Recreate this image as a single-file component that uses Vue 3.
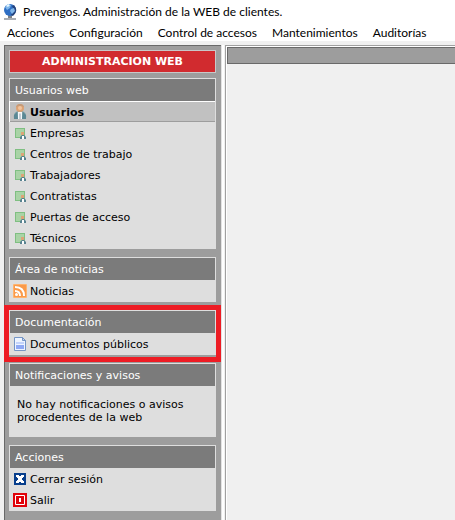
<template>
  <div class="window">
    <header class="title-bar">
      <svg class="globe" viewBox="0 0 16 18" aria-hidden="true">
        <path d="M2 15h12v2H2z" fill="#a9adb3" />
        <path d="M6 12h4v3H6z" fill="#7d8288" />
        <circle cx="8" cy="7" r="6" fill="#2f6fc4" />
        <path d="M12 2q5 6-1 11l-2-1q4-5 1-9z" fill="#24427c" />
        <path d="M3 4l3-3 3 1-1 3-3 2zM9 6l3-1 1 3-3 3-2-3z" fill="#7fb6ea" />
        <path d="M4 3l2-2 2 1-2 2z" fill="#e5f6ff" />
      </svg>
      <h1>Prevengos. Administración de la WEB de clientes.</h1>
    </header>

    <nav class="menu-bar">
      <button v-for="item in menu" :key="item" type="button">{{ item }}</button>
    </nav>

    <div class="workspace">
      <aside class="sidebar">
        <h2 class="banner">ADMINISTRACION WEB</h2>
        <section
          v-for="panel in panels"
          :key="panel.title"
          class="panel"
          :class="{ highlighted: panel.highlighted }"
        >
          <h3>{{ panel.title }}</h3>
          <p v-if="panel.message">{{ panel.message }}</p>
          <ul v-else>
            <li v-for="item in panel.items" :key="item.label">
              <button
                type="button"
                :class="{ selected: selected === item.label }"
                @click="selected = item.label"
              >
                <svg v-if="item.icon === 'user'" viewBox="0 0 14 16" aria-hidden="true">
                  <path d="M1 15q-1-7 4-8h4q5 1 4 8z" fill="#7ba0a8" />
                  <path d="M1 15v-4l3-3 1 7zM13 15v-4l-3-3-1 7z" fill="#5b8894" />
                  <path d="M5 8h4v7H5z" fill="#f5f8fa" />
                  <path d="M7 9l1 1v5H6v-5z" fill="#c3ccd4" />
                  <ellipse cx="7" cy="4" rx="4" ry="4" fill="#dda273" />
                  <path d="M3 3q1-3 4-3t4 3q-4-2-8 0z" fill="#c39a78" />
                  <ellipse cx="7" cy="4" rx="2" ry="2" fill="#f3c49c" />
                </svg>
                <svg v-else-if="item.icon === 'group'" viewBox="0 0 14 14" aria-hidden="true">
                  <path d="M2 2h10v10H2z" fill="#7fbf82" />
                  <path d="M3 3h8v8H3z" fill="#a9d3a6" />
                  <path d="M7 13v-2l2-2h2l2 2v2z" fill="#58828f" />
                  <path d="M9 10h2v3H9z" fill="#fff" />
                  <path d="M8 6h3v3H8z" fill="#dda377" />
                </svg>
                <svg v-else-if="item.icon === 'rss'" viewBox="0 0 14 14" aria-hidden="true">
                  <rect width="14" height="14" rx="1" fill="#ffb36d" />
                  <path d="M1 1h12v12H1z" fill="#fa9a4a" />
                  <g fill="none" stroke="#fff" stroke-width="2">
                    <path d="M2 7q5 0 5 5M2 3q9 0 9 9" />
                  </g>
                  <circle cx="3.5" cy="10.5" r="1.5" fill="#fff" />
                </svg>
                <svg v-else-if="item.icon === 'document'" viewBox="0 0 14 14" aria-hidden="true">
                  <path d="M1.5.5h8l3 3v10h-11z" fill="#eef4ff" stroke="#7595c5" />
                  <path d="M9.5.5v3h3z" fill="#c4d7f5" stroke="#7595c5" />
                  <path d="M3 5h8v2H3z" fill="#c3d3fb" />
                  <path d="M3 8h8v4H3z" fill="#8fa9f4" />
                </svg>
                <svg v-else-if="item.icon === 'close'" viewBox="0 0 14 14" aria-hidden="true">
                  <path d="M1 1h12v12H1z" fill="#073e8c" />
                  <path
                    d="M3 3h3v1h2V3h3v2h-1v1H9v2h1v1h1v2H8v-1H6v1H3V9h1V8h1V6H4V5H3z"
                    fill="#fff"
                  />
                </svg>
                <svg v-else viewBox="0 0 14 14" aria-hidden="true">
                  <path d="M0 0h14v14H0z" fill="#e00008" />
                  <path d="M2.5 2.5h9v9h-9z" fill="none" stroke="#fff" />
                  <path d="M6 5h2v4H6z" fill="#fff" />
                </svg>
                <span>{{ item.label }}</span>
              </button>
            </li>
          </ul>
        </section>
      </aside>

      <main class="content">
        <div class="content-bar"></div>
      </main>
    </div>
  </div>
</template>

<script setup>
import { ref } from "vue";

const selected = ref("Usuarios");

const menu = [
  "Acciones",
  "Configuración",
  "Control de accesos",
  "Mantenimientos",
  "Auditorías",
];

const panels = [
  {
    title: "Usuarios web",
    items: [
      { label: "Usuarios", icon: "user" },
      { label: "Empresas", icon: "group" },
      { label: "Centros de trabajo", icon: "group" },
      { label: "Trabajadores", icon: "group" },
      { label: "Contratistas", icon: "group" },
      { label: "Puertas de acceso", icon: "group" },
      { label: "Técnicos", icon: "group" },
    ],
  },
  { title: "Área de noticias", items: [{ label: "Noticias", icon: "rss" }] },
  {
    title: "Documentación",
    highlighted: true,
    items: [{ label: "Documentos públicos", icon: "document" }],
  },
  {
    title: "Notificaciones y avisos",
    message: "No hay notificaciones o avisos procedentes de la web",
  },
  {
    title: "Acciones",
    items: [
      { label: "Cerrar sesión", icon: "close" },
      { label: "Salir", icon: "exit" },
    ],
  },
];
</script>

<style>
body {
  margin: 0;
}
</style>

<style scoped>
.window {
  display: flex;
  flex-direction: column;
  box-sizing: border-box;
  min-height: 100vh;
  background: #f0f0f0;
  color: #000;
  font-family: Lato, "Open Sans", sans-serif;
  font-size: 12px;
}

h1,
h2,
h3,
p,
ul {
  margin: 0;
  padding: 0;
  font-size: inherit;
  font-weight: normal;
}

button {
  border: 0;
  background: none;
  color: inherit;
  font: inherit;
  text-align: left;
}

.title-bar {
  display: flex;
  align-items: center;
  gap: 5px;
  height: 23px;
  padding-left: 2px;
  background: #fff;
}

.globe {
  width: 16px;
  height: 18px;
}

.menu-bar {
  display: flex;
  gap: 15px;
  height: 18px;
  padding-left: 7px;
  background: #fff;
}

.menu-bar button {
  padding: 0;
  line-height: 20px;
  white-space: nowrap;
}

.workspace {
  display: flex;
  flex: 1;
  gap: 4px;
  padding: 4px 0 0 4px;
}

.sidebar {
  display: flex;
  flex-direction: column;
  flex: none;
  gap: 8px;
  box-sizing: border-box;
  width: 217px;
  padding: 4px 5px 8px 4px;
  border-top: 1px solid #696969;
  border-left: 1px solid #696969;
  background: #9d9d9d;
  box-shadow: 1px 0 #e3e3e3, 3px 0 #fff;
  font-family: "DejaVu Sans", sans-serif;
  font-size: 11px;
}

.banner {
  margin-bottom: -3px;
  border: 1px solid #c8c8c8;
  background: #d12b2f;
  color: #fff;
  font-weight: bold;
  line-height: 21px;
  text-align: center;
}

.panel {
  position: relative;
  border: 1px solid #dedede;
  background: #dedede;
}

.panel h3 {
  padding: 1px 0 0 5px;
  background: #7b7b7b;
  color: #fff;
  line-height: 21px;
}

.panel ul {
  list-style: none;
}

.panel li button {
  display: flex;
  align-items: center;
  gap: 3px;
  box-sizing: border-box;
  width: 100%;
  height: 21px;
  padding: 0 3px;
}

.panel li span {
  padding-top: 2px;
}

.panel li svg {
  width: 14px;
  height: 14px;
}

.panel li button.selected {
  background: #c1c1c1;
  box-shadow: inset 0 1px #fff, inset 0 -1px #9d9d9d, -1px 0 #fff;
  font-weight: bold;
}

.panel li .selected svg {
  height: 16px;
}

.panel p {
  padding: 12px 7px;
  line-height: 13px;
}

.highlighted {
  box-shadow: 0 2px #9d9d9d;
}

.highlighted::after {
  position: absolute;
  inset: -6px -6px -8px;
  border: 5px solid #ed1c24;
  content: "";
  pointer-events: none;
}

.content {
  flex: 1;
  min-width: 0;
  border-top: 1px solid #a0a0a0;
  border-left: 1px solid #a0a0a0;
  box-shadow: inset 1px 1px #fff;
}

.content-bar {
  height: 15px;
  margin: 1px 0 0 1px;
  border: 1px solid #696969;
  border-right: 0;
  background: #9d9d9d;
}
</style>
